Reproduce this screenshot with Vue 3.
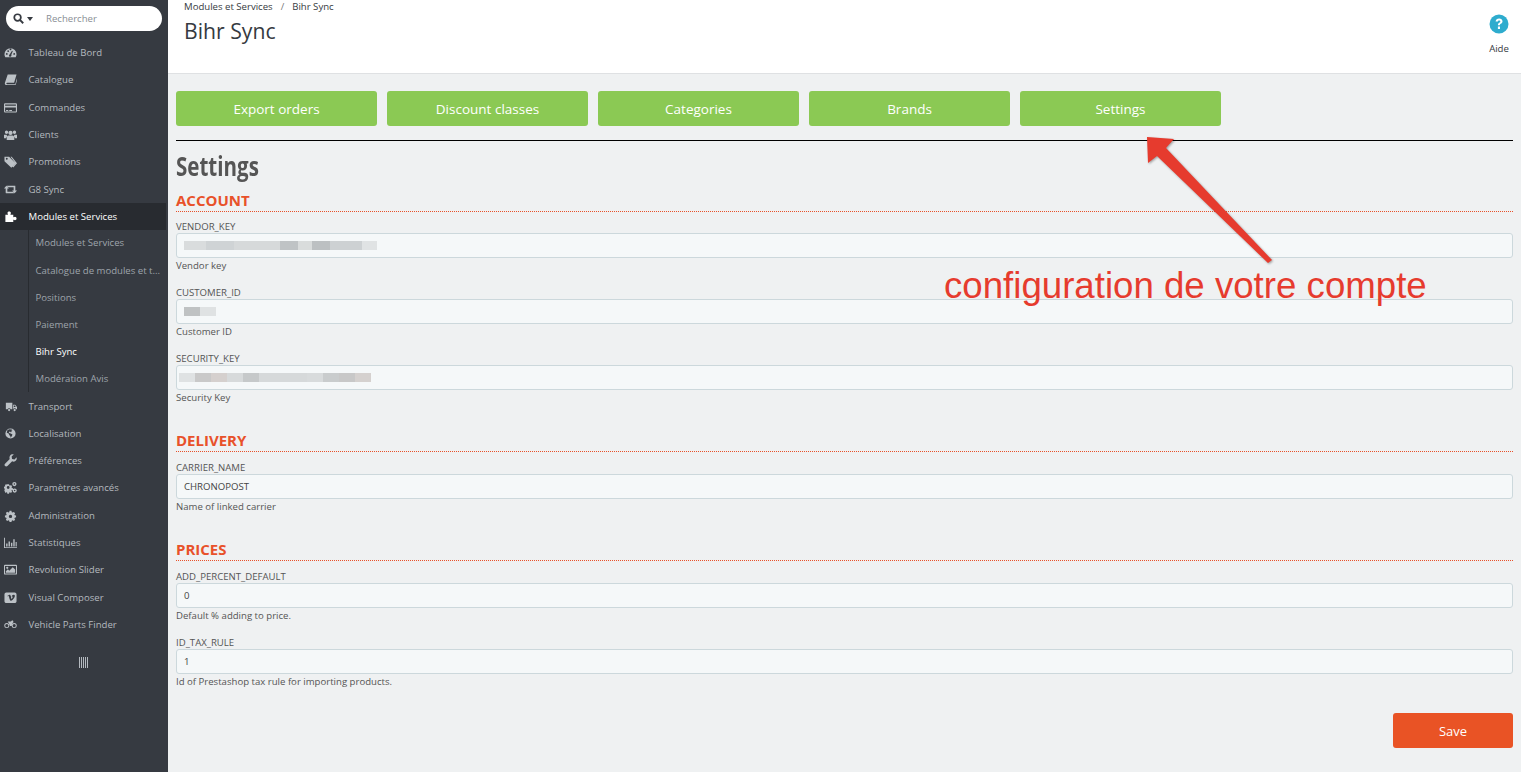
<script setup>
const menuTop = [
  { label: 'Tableau de Bord', icon: 'gauge' },
  { label: 'Catalogue', icon: 'book' },
  { label: 'Commandes', icon: 'card' },
  { label: 'Clients', icon: 'users' },
  { label: 'Promotions', icon: 'tags' },
  { label: 'G8 Sync', icon: 'retweet' },
]
const subMenu = ['Modules et Services', 'Catalogue de modules et t...', 'Positions', 'Paiement', 'Bihr Sync', 'Modération Avis']
const menuBottom = [
  { label: 'Transport', icon: 'truck' },
  { label: 'Localisation', icon: 'globe' },
  { label: 'Préférences', icon: 'wrench' },
  { label: 'Paramètres avancés', icon: 'cogs' },
  { label: 'Administration', icon: 'cog' },
  { label: 'Statistiques', icon: 'chart' },
  { label: 'Revolution Slider', icon: 'picture' },
  { label: 'Visual Composer', icon: 'vimeo' },
  { label: 'Vehicle Parts Finder', icon: 'moto' },
]
const tabs = ['Export orders', 'Discount classes', 'Categories', 'Brands', 'Settings']
const sections = [
  {
    title: 'ACCOUNT',
    fields: [
      { label: 'VENDOR_KEY', help: 'Vendor key', shift: 'start', redact: [[22, '#d9dcdd'], [28, '#cfd3d5'], [46, '#d6d9da'], [18, '#bfc3c5'], [14, '#d9dcdc'], [18, '#bcc0c2'], [32, '#cdd1d3'], [15, '#e0e3e4']] },
      { label: 'CUSTOMER_ID', help: 'Customer ID', shift: 'start', redact: [[16, '#bfc2c3'], [16, '#dfe2e3']] },
      { label: 'SECURITY_KEY', help: 'Security Key', shift: 'back', redact: [[16, '#dfe2e3'], [16, '#c9c9c9'], [16, '#d5d0ce'], [16, '#d7dadb'], [16, '#c6c9ca'], [48, '#d6d9da'], [16, '#d8dbdc'], [16, '#c9cccd'], [16, '#c8c8c8'], [16, '#d5d1cf']] },
    ],
  },
  { title: 'DELIVERY', fields: [{ label: 'CARRIER_NAME', value: 'CHRONOPOST', help: 'Name of linked carrier' }] },
  {
    title: 'PRICES',
    fields: [
      { label: 'ADD_PERCENT_DEFAULT', value: '0', help: 'Default % adding to price.' },
      { label: 'ID_TAX_RULE', value: '1', help: 'Id of Prestashop tax rule for importing products.' },
    ],
  },
]
const icons = {
  gauge: 'M7 2.5a6.5 6.5 0 0 0-6.5 6.5c0 1.2.3 2.3.9 3.2h11.2c.6-.9.9-2 .9-3.2A6.5 6.5 0 0 0 7 2.5zM3 9.5a1 1 0 1 1 0-2 1 1 0 0 1 0 2zm1.5-3a1 1 0 1 1 0-2 1 1 0 0 1 0 2zM7 4.6a1 1 0 1 1 0-2 1 1 0 0 1 0 2zm1 5.7a1.3 1.3 0 1 1-1.9-1.2L8.6 5l.9.4-1.6 3.9c.1.3.1.6.1 1zm3-.8a1 1 0 1 1 0-2 1 1 0 0 1 0 2z',
  book: 'M4 1.500h9.500l-2.600 9H3.500c-.7 0-1 .3-1 .8s.4.8 1 .8h8.600l2-6.800.6.5-2.200 7.200H3C1.500 13 .6 12 1 10.600z',
  card: 'M1.400 2.500h11.200c.8 0 1.400.6 1.400 1.400v7.200c0 .8-.6 1.400-1.400 1.400H1.400C.6 12.500 0 11.900 0 11.100V3.900c0-.8.6-1.400 1.400-1.400zM1.200 3.700v1.500h11.600V3.700zm0 3.300v4.300h11.600V7zm1 2.800h2.400v.9H2.200zm3.400 0h3v.9h-3z',
  users: 'M7 3a2.300 2.300 0 1 1 0 4.600A2.300 2.300 0 0 1 7 3zM2.700 2.800a1.800 1.800 0 1 1 0 3.600 1.800 1.800 0 0 1 0-3.600zm8.600 0a1.800 1.800 0 1 1 0 3.600 1.800 1.800 0 0 1 0-3.600zM0 7.200h3c-.1.8.3 1.500.8 1.900-1 .4-1.600 1.200-1.700 2H0zm11 0h3v3.900h-2.100c-.1-.8-.7-1.600-1.700-2 .5-.4.9-1.100.8-1.900zM4.900 8.200h4.200c1.300 0 2 .9 2 2.200V13H2.900v-2.600c0-1.300.7-2.200 2-2.200z',
  tags: 'M.5 2h5l7 7-4.600 4.600-7.400-7zM3 5a1 1 0 1 0 0-2 1 1 0 0 0 0 2zm4-3h1.300l5.700 7-4 4.400-.9-.9 3.300-3.500z',
  retweet: 'M2.500 3 5.300 6H3.600v3.300h6.100l1.500 1.700H2.200c-.3 0-.4-.2-.4-.4V6H0zm9 8L8.700 8h1.700V4.700H4.300L2.800 3h9c.3 0 .4.2.4.4V8H14z',
  puzzle: 'M1.500 5h2.400c.4 0 .5-.3.3-.6-.3-.4-.5-.7-.5-1.200C3.700 2.100 4.600 1.500 5.600 1.500s1.900.6 1.900 1.700c0 .5-.2.8-.5 1.200-.2.3-.1.6.3.6H10v2.400c0 .4.3.5.6.3.4-.3.700-.5 1.200-.5 1 0 1.700.9 1.700 1.900s-.7 1.900-1.700 1.900c-.5 0-.8-.2-1.200-.5-.3-.2-.6-.1-.6.3V13H1.500z',
  truck: 'M2 3h7v7H7.200a1.800 1.800 0 0 0-3.400 0H2zm7.800 2H12l2 2.600V10h-.8a1.800 1.800 0 0 0-3.400 0zm.8 1v1.600h2.100L11.500 6zM5.500 9.600a1.200 1.200 0 1 1 0 2.400 1.200 1.200 0 0 1 0-2.400zm6 0a1.200 1.200 0 1 1 0 2.400 1.200 1.200 0 0 1 0-2.400z',
  globe: 'M7 1.500a5.500 5.500 0 1 1 0 11 5.500 5.500 0 0 1 0-11zM3.600 3.600 3 6.200l2 .8.8 2 1 .6.2 2 1.500-1.800.6-1.600-1.800-1.300-1.800-.5-.3-1 1.300-.5.7.7 1-.3-.3-1.300 1.300-.8-1-.6-2.500-.2z',
  wrench: 'M13.600 3.600c.4 1.700-.1 3.200-1.300 4-1.100.7-2.400.8-3.500.3L3.700 13c-.7.7-1.900.7-2.600 0s-.7-1.900 0-2.600l5.100-5.100C5.700 4.200 5.800 2.900 6.500 1.800 7.300.6 8.900.1 10.500.5L8.200 2.800l.5 2.600 2.600.5z',
  cogs: 'M3.600 3.500h1.800l.3 1.200.8.3 1-.6 1.200 1.200-.6 1 .3.8 1.200.3v1.800l-1.200.3-.3.8.6 1-1.200 1.200-1-.6-.8.3-.3 1.200H3.600l-.3-1.200-.8-.3-1 .6L.3 10l.6-1-.3-.8L0 7.900V6.100l.6-.1.600-.2.100-.6-.3-.6L2 3.400l.7.4.7-.2zM4.500 5.500a1.500 1.500 0 1 0 0 3 1.500 1.500 0 0 0 0-3zM11.200 1a2.300 2.300 0 1 1 0 4.600 2.300 2.300 0 0 1 0-4.600zm0 1.500a.8.8 0 1 0 0 1.600.8.8 0 0 0 0-1.600zM11.500 8a2.300 2.300 0 1 1 0 4.600 2.300 2.300 0 0 1 0-4.600zm0 1.500a.8.8 0 1 0 0 1.600.8.8 0 0 0 0-1.600z',
  cog: 'M6 2h2l.4 1.500.9.4 1.300-.8 1.400 1.400-.8 1.300.4.9L13 7v2l-1.400.4-.4.9.8 1.300-1.400 1.400-1.300-.8-.9.4L8 14H6l-.4-1.400-.9-.4-1.300.8L2 11.600l.8-1.300-.4-.9L1 9V7l1.400-.4.4-.9L2 4.400 3.400 3l1.300.8.9-.4zM7 6.200a1.800 1.800 0 1 0 0 3.600 1.800 1.800 0 0 0 0-3.600z',
  chart: 'M0 2h1v10h13v1H0zM2.300 8h1.500v3.200H2.300zm2.600-2h1.500v5.200H4.900zm2.600 1.400H9v3.800H7.500zM10 3.500h1.500v7.700H10zm2.500 3h1.200v4.700h-1.200z',
  picture: 'M1 2h12c.6 0 1 .4 1 1v8.500c0 .6-.4 1-1 1H1c-.6 0-1-.4-1-1V3c0-.6.4-1 1-1zm.1 1.100v8.300h11.800V3.100zM2 10.500V9l2.200-2.200 1.500 1.500 3.700-3.800 2.600 2.600v3.400zM3.500 4a1.200 1.200 0 1 1 0 2.400 1.200 1.200 0 0 1 0-2.400z',
  vimeo: 'M2.500 1.500h9c1.100 0 2 .9 2 2v7.500c0 1.100-.9 2-2 2h-9c-1.100 0-2-.9-2-2V3.500c0-1.100.9-2 2-2zm.8 3.700.4.5c.7-.5 1-.7 1.300-.3.6 1.200 1 4 2 5 .9.700 2.500-.7 3.900-2.800 1.200-1.900 1.100-3.500-.4-3.500-1.300 0-2 1-2.300 2 .9-.5 1.500 0 .9 1.300-.5 1-1 1.400-1.200 1-.5-1.500-.3-4.300-2-4.300-.8 0-1.700 1-2.600 1.800z',
  moto: 'M3 5.500a2.700 2.700 0 1 1 0 5.400 2.700 2.700 0 0 1 0-5.400zm0 1a1.700 1.700 0 1 0 0 3.400 1.700 1.700 0 0 0 0-3.400zm8-1a2.700 2.700 0 1 1 0 5.400 2.700 2.700 0 0 1 0-5.400zm0 1a1.700 1.700 0 1 0 0 3.400 1.700 1.700 0 0 0 0-3.400zM4 3.800h3.500l1-1h1.200l.5 1.900-1 .8-1.200 3H6.500L5.500 6.300z',
}
</script>

<template>
  <div class="page">
    <aside class="sidebar">
      <div class="search">
        <svg class="search-icon" viewBox="0 0 14 14" aria-hidden="true">
          <circle cx="5.800" cy="5.800" r="4.200" fill="none" stroke="#363a41" stroke-width="2.200" />
          <path d="M8.800 8.800 13 13" stroke="#363a41" stroke-width="2.500" />
        </svg>
        <span class="caret"></span>
        <span class="search-text">Rechercher</span>
      </div>
      <nav class="menu">
        <a v-for="item in menuTop" :key="item.label" class="item">
          <svg class="icon" viewBox="0 0 14 14" aria-hidden="true"><path :d="icons[item.icon]" fill-rule="evenodd" /></svg>
          <span>{{ item.label }}</span>
        </a>
        <a class="item active">
          <svg class="icon" viewBox="0 0 14 14" aria-hidden="true"><path :d="icons.puzzle" /></svg>
          <span>Modules et Services</span>
        </a>
        <div class="submenu">
          <a v-for="(s, i) in subMenu" :key="s" class="subitem" :class="{ current: i === 4 }">{{ s }}</a>
        </div>
        <a v-for="item in menuBottom" :key="item.label" class="item">
          <svg class="icon" viewBox="0 0 14 14" aria-hidden="true"><path :d="icons[item.icon]" fill-rule="evenodd" /></svg>
          <span>{{ item.label }}</span>
        </a>
      </nav>
      <div class="collapse"><i></i><i></i><i></i><i></i><i></i></div>
    </aside>

    <main class="main">
      <header class="head">
        <div class="head-left">
          <div class="crumbs"><span>Modules et Services</span><span class="sep">/</span><span>Bihr Sync</span></div>
          <h1>Bihr Sync</h1>
        </div>
        <div class="help">
          <svg viewBox="0 0 20 20" aria-hidden="true">
            <circle cx="10" cy="10" r="9.500" fill="#2eacce" />
            <path d="M6.600 7.400c.2-2 1.600-3 3.500-3 2 0 3.400 1.200 3.400 2.800 0 1.400-.8 2-1.700 2.600-.7.500-.9.800-.9 1.500H8.900c0-1.300.4-1.900 1.300-2.500.8-.5 1.100-.8 1.100-1.400 0-.6-.5-1-1.200-1-.8 0-1.200.5-1.300 1.200zM8.900 12.600H11v2.400H8.900z" fill="#fff" />
          </svg>
          <span>Aide</span>
        </div>
      </header>

      <div class="content">
        <div class="tabs">
          <button v-for="t in tabs" :key="t" class="tab">{{ t }}</button>
        </div>
        <hr class="rule" />
        <h2><span>Settings</span></h2>

        <section v-for="sec in sections" :key="sec.title" class="section">
          <h3>{{ sec.title }}</h3>
          <div v-for="f in sec.fields" :key="f.label" class="field">
            <label>{{ f.label }}</label>
            <div class="input">
              <template v-if="f.value">{{ f.value }}</template>
              <span v-else class="redact" :class="f.shift">
                <i v-for="(r, i) in f.redact" :key="i" :style="{ width: r[0] + 'px', background: r[1] }"></i>
              </span>
            </div>
            <p>{{ f.help }}</p>
          </div>
        </section>

        <div class="actions"><button class="save">Save</button></div>
      </div>
    </main>

    <svg class="arrow" width="140" height="135" viewBox="1140 132 140 135" aria-hidden="true">
      <polygon points="1147,137 1174,139 1166,148 1272,260 1268,263 1157,156 1148,163" fill="#e63b2e" />
    </svg>
    <div class="note">configuration de votre compte</div>
  </div>
</template>

<style>
html, body { margin: 0; padding: 0; overflow: hidden; }
</style>

<style scoped>
.page {
  position: relative;
  display: flex;
  width: 1521px;
  height: 772px;
  overflow: hidden;
  background: #eff1f2;
  font-family: "Open Sans", "Liberation Sans", sans-serif;
  font-size: 9.600px;
  color: #555;
}
.sidebar {
  flex: 0 0 168px;
  background: #363a41;
  box-sizing: border-box;
  padding-top: 6px;
}
.search {
  display: flex;
  align-items: center;
  height: 25px;
  margin: 0 6px;
  padding-left: 7px;
  background: #fff;
  border-radius: 12.500px;
}
.search-icon { width: 11px; height: 11px; }
.caret {
  width: 0;
  height: 0;
  margin-left: 3px;
  border: 3.500px solid transparent;
  border-top: 4px solid #363a41;
  border-bottom: 0;
}
.search-text { margin-left: 13px; color: #8a8f96; }
.menu { margin-top: 7.900px; }
.item {
  display: flex;
  align-items: center;
  height: 27.300px;
  padding-left: 4px;
  color: #b4b9bf;
}
.icon {
  flex: 0 0 13px;
  width: 13px;
  height: 13px;
  margin-right: 11.500px;
  fill: #bcc1c6;
}
.item.active {
  height: 27.300px;
  margin-right: 2px;
  background: #282b30;
  color: #fff;
}
.item.active .icon { fill: #fff; }
.submenu {
  margin-left: 28px;
  padding-bottom: .400px;
  border-left: 1px solid #282b30;
}
.subitem {
  display: block;
  height: 27px;
  line-height: 26px;
  padding-left: 6.500px;
  color: #9ea4ab;
  white-space: nowrap;
}
.subitem + .subitem { line-height: 27px; }
.subitem.current { color: #fff; }
.collapse {
  display: flex;
  justify-content: center;
  gap: 1px;
  margin: 19px 1px 0 0;
}
.collapse i { width: 1px; height: 11px; background: #b4b9bf; }

.main { flex: 1; min-width: 0; }
.head {
  display: flex;
  justify-content: space-between;
  height: 73px;
  padding: 0 12px 0 16px;
  background: #fff;
  border-bottom: 1px solid #dfe1e3;
}
.crumbs { display: flex; color: #363a41; line-height: 14px; }
.sep { margin: 0 8px; color: #777; }
h1 {
  margin: 3px 0 0;
  font-size: 21.200px;
  font-weight: 400;
  line-height: 28px;
  color: #363a41;
}
.help {
  display: flex;
  flex-direction: column;
  align-items: center;
  margin-top: 14px;
  color: #363a41;
}
.help svg { width: 20px; height: 20px; margin-bottom: 8px; }
.content { padding: 17px 8px 0; }
.tabs { display: flex; gap: 10px; }
.tab {
  width: 201px;
  height: 35px;
  padding: 0;
  border: 0;
  border-radius: 3px;
  background: #8bc954;
  color: #fff;
  font: 400 13.500px "Open Sans", sans-serif;
}
.rule { margin: 14px 0 0; border: 0; border-top: 1px solid #000; }
h2 {
  margin: 9px 0 0;
  height: 42px;
  line-height: 32px;
  font-size: 26px;
  font-weight: 700;
  color: #555;
}
h2 span {
  display: inline-block;
  transform: scaleX(0.79);
  transform-origin: left center;
}
.section + .section { margin-top: 15px; }
h3 {
  height: 19px;
  margin: 0 0 7px;
  border-bottom: 1px dotted #e8512a;
  font-size: 15px;
  line-height: 17px;
  font-weight: 700;
  color: #e8512a;
}
.section + .section h3 { margin-bottom: 8px; }
.field { height: 66px; }
label { display: block; height: 14px; line-height: 16px; color: #555; }
.input {
  box-sizing: border-box;
  height: 25px;
  padding: 0 7px;
  line-height: 23px;
  background: #f5f8f9;
  border: 1px solid #ccd8dc;
  border-radius: 3px;
  color: #444;
}
.redact { display: flex; height: 100%; align-items: center; }
.redact i { height: 9px; }
.start { margin-left: 0; }
.back { margin-left: -5px; }
p { margin: 1px 0 0; line-height: 14px; color: #555; }
.actions { display: flex; justify-content: flex-end; margin-top: 12px; }
.save {
  width: 120px;
  height: 35px;
  border: 0;
  border-radius: 3px;
  background: #e95325;
  color: #fff;
  font: 400 13px "Open Sans", sans-serif;
}
.arrow {
  position: absolute;
  left: 1140px;
  top: 132px;
  filter: drop-shadow(1px 1px 1px rgba(0, 0, 0, 0.35));
}
.note {
  position: absolute;
  left: 944px;
  top: 265px;
  font-family: "Liberation Sans", Arial, sans-serif;
  font-size: 36.650px;
  line-height: 42px;
  color: #e63b2e;
  white-space: nowrap;
}
</style>
